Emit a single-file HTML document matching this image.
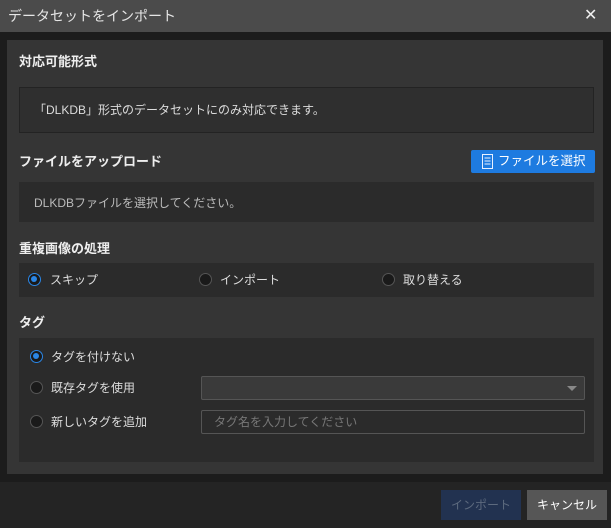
<!DOCTYPE html>
<html><head><meta charset="utf-8"><style>
*{box-sizing:border-box;margin:0;padding:0}
body{width:611px;height:528px;background:#1c1c1c;font-family:"Liberation Sans","Noto Sans CJK JP",sans-serif;color:#ddd;position:relative;overflow:hidden;font-size:12px}
.a{position:absolute}
.t{white-space:nowrap;line-height:1}
.h{font-weight:bold;font-size:13px;color:#eee}
.r{width:13px;height:13px;border-radius:50%;background:#1a1a1a;border:1px solid #555}
.r.on{border:1.5px solid #2a86e6;background:#1a1a1a}
.r.on::after{content:"";position:absolute;left:2px;top:2px;width:6px;height:6px;border-radius:50%;background:#2a86e6}
</style></head><body>
<div class="a" style="left:0;top:0;width:611px;height:32px;background:#4b4b4b"></div>
<div class="a t" style="left:8px;top:9px;font-size:14px;color:#e6e6e6">データセットをインポート</div>
<div class="a t" style="left:584px;top:8px;font-size:16px;color:#eee">✕</div>
<div class="a" style="left:7px;top:40px;width:596px;height:434px;background:#353535"></div>
<div class="a t h" style="left:19px;top:55px">対応可能形式</div>
<div class="a" style="left:19px;top:87px;width:575px;height:46px;background:#2f2f2f;border:1px solid #232323"></div>
<div class="a t" style="left:34px;top:104px;color:#ddd">「DLKDB」形式のデータセットにのみ対応できます。</div>
<div class="a t h" style="left:19px;top:155px">ファイルをアップロード</div>
<div class="a" style="left:471px;top:150px;width:124px;height:23px;background:#1e7be0;border-radius:2px"></div>
<svg class="a" style="left:482px;top:154px" width="11" height="15" viewBox="0 0 11 15"><rect x="0.5" y="0.5" width="10" height="14" fill="none" stroke="#e8f0ff"/><path d="M2.5 4h6M2.5 7h6M2.5 10h6" stroke="#e8f0ff"/></svg>
<div class="a t" style="left:498px;top:155px;color:#fff;font-size:12.5px">ファイルを選択</div>
<div class="a" style="left:19px;top:182px;width:575px;height:40px;background:#2b2b2b"></div>
<div class="a t" style="left:34px;top:197px;color:#bbb">DLKDBファイルを選択してください。</div>
<div class="a t h" style="left:19px;top:242px">重複画像の処理</div>
<div class="a" style="left:19px;top:263px;width:575px;height:34px;background:#2b2b2b"></div>
<div class="a r on" style="left:28px;top:273px"></div><div class="a t" style="left:50px;top:274px">スキップ</div>
<div class="a r" style="left:199px;top:273px"></div><div class="a t" style="left:220px;top:274px">インポート</div>
<div class="a r" style="left:382px;top:273px"></div><div class="a t" style="left:403px;top:274px">取り替える</div>
<div class="a t h" style="left:19px;top:316px">タグ</div>
<div class="a" style="left:19px;top:338px;width:575px;height:124px;background:#2b2b2b"></div>
<div class="a r on" style="left:30px;top:350px"></div><div class="a t" style="left:51px;top:351px">タグを付けない</div>
<div class="a r" style="left:30px;top:381px"></div><div class="a t" style="left:51px;top:382px">既存タグを使用</div>
<div class="a r" style="left:30px;top:415px"></div><div class="a t" style="left:51px;top:416px">新しいタグを追加</div>
<div class="a" style="left:201px;top:376px;width:384px;height:24px;background:#3a3a3a;border:1px solid #555;border-radius:2px"></div>
<div class="a" style="left:567px;top:386px;width:0;height:0;border-left:5px solid transparent;border-right:5px solid transparent;border-top:5px solid #888"></div>
<div class="a" style="left:201px;top:410px;width:384px;height:24px;background:#2b2b2b;border:1px solid #555;border-radius:2px"></div>
<div class="a t" style="left:214px;top:416px;color:#777">タグ名を入力してください</div>
<div class="a" style="left:0;top:482px;width:611px;height:46px;background:#242424"></div>
<div class="a" style="left:441px;top:490px;width:80px;height:30px;background:#223250"></div>
<div class="a t" style="left:451px;top:499px;color:#5d6a7e">インポート</div>
<div class="a" style="left:527px;top:490px;width:80px;height:30px;background:#565656"></div>
<div class="a t" style="left:537px;top:499px;color:#fff">キャンセル</div>
</body></html>
